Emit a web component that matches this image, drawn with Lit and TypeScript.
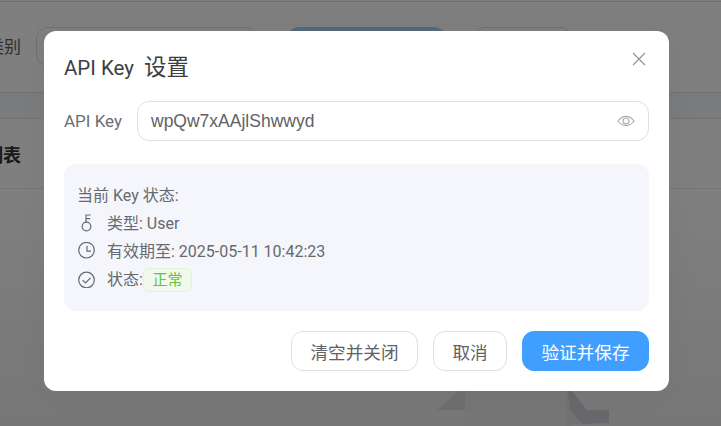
import { LitElement, html, css } from "lit";
import { customElement } from "lit/decorators.js";

@customElement("app-root")
export class AppRoot extends LitElement {
  static styles = css`
    :host { display: block; width: 721px; height: 426px; position: relative; overflow: hidden;
      font-family: "Roboto", "Noto Sans CJK SC", "Liberation Sans", sans-serif; background: #fff; }
    .page { height: 426px; display: flex; flex-direction: column; overflow: hidden; background: #fff; }
    .filters { height: 92px; flex: none; box-sizing: border-box; border-top: 1px solid #d8d8d8; margin-top: 1px; padding: 25px 0 0 0; display: flex; align-items: flex-start; border-bottom: 1px solid #e4e4e4; }
    .lab { font-size: 17px; color: #606266; width: 34px; margin-left: -13px; margin-right: 15px; line-height: 40px; white-space: nowrap; flex: none; }
    .fin { width: 222px; height: 39px; box-sizing: border-box; border: 1px solid #dcdfe6; border-radius: 12px; flex: none; }
    .fbtn { width: 159px; height: 40px; border-radius: 12px; background: #a9d2f8; margin-left: 29px; flex: none; }
    .fbtn2 { width: 99px; height: 39px; box-sizing: border-box; border-radius: 12px; border: 1px solid #dcdfe6; margin-left: 27px; flex: none; }
    .band { height: 26px; flex: none; box-sizing: border-box; background: #f5f6fa; border-bottom: 1px solid #e4e4e4; }
    .title { height: 70px; flex: none; box-sizing: border-box; border-bottom: 1px solid #e8e8e8; font-size: 18px; font-weight: 700; color: #303133; display: flex; align-items: center; }
    .title span { margin-left: -15px; white-space: nowrap; }
    .art { flex: 1; position: relative; background: linear-gradient(#ffffff, #eeeeee); }
    .art svg { position: absolute; left: 0; top: 0; }
    .overlay { position: absolute; inset: 0; background: rgba(0,0,0,.5); }
    .modal { position: absolute; left: 44px; top: 31px; width: 625px; height: 360px; box-sizing: border-box; background: #fff; border-radius: 12px; padding: 20px; display: flex; flex-direction: column; box-shadow: 0 0 32px rgba(0,0,0,.04); }
    .head { font-size: 20.5px; line-height: 32px; color: #3c3e42; height: 32px; white-space: nowrap; }
    .head span { font-size: 22.5px; margin-left: 10px; }
    .close { position: absolute; left: 587px; top: 20px; width: 16px; height: 16px; color: #909399; }
    .form { display: flex; align-items: center; margin-top: 18px; height: 40px; }
    .form label { font-size: 17px; color: #6b6e73; width: 73px; flex: none; }
    .input { flex: 1; height: 40px; box-sizing: border-box; border: 1px solid #dcdfe6; border-radius: 12px; display: flex; align-items: center; padding: 0 13px; justify-content: space-between; }
    .input span { font-family: "Liberation Sans", sans-serif; font-size: 17.5px; color: #606266; }
    .input svg { width: 18px; height: 18px; color: #a8abb2; flex: none; }
    .info { margin-top: 23px; background: #f4f6fb; border-radius: 12px; height: 147px; box-sizing: border-box; padding: 18px 13px; font-size: 16px; color: #66696e; display: flex; flex-direction: column; }
    .row { height: 28.2px; display: flex; align-items: center; line-height: 28px; white-space: nowrap; }
    .row svg { width: 18px; height: 18px; flex: none; margin-right: 12px; margin-bottom: 3px; }
    .tag { display: inline-flex; align-items: center; justify-content: center; width: 49px; height: 24px; box-sizing: border-box; background: #f0f9eb; border: 1px solid #e1f3d8; border-radius: 6px; color: #67c23a; font-size: 15px; }
    .foot { margin-top: 20px; display: flex; justify-content: flex-end; gap: 15px; }
    button { font: inherit; height: 40px; box-sizing: border-box; border-radius: 12px; border: 1px solid #dcdfe6; background: #fff; color: #606266; font-size: 17.6px; padding: 0; cursor: pointer; }
    .b1 { width: 127px; } .b2 { width: 74px; }
    .b3 { width: 127px; background: #409eff; border-color: #409eff; color: #fff; }
  `;
  render() {
    return html`
      <div class="page">
        <div class="filters">
          <div class="lab">类别</div>
          <div class="fin"></div>
          <div class="fbtn"></div>
          <div class="fbtn2"></div>
        </div>
        <div class="band"></div>
        <div class="title"><span>列表</span></div>
        <div class="art">
          <svg width="721" height="237" viewBox="0 189 721 237">
            <path d="M437 410 L465 385 V410 Z" fill="#d9dce0"/>
            <path d="M465 385 H567 V426 H465 Z" fill="#eaebed"/>
            <path d="M567 385 L587 410 H609 V423 L582 424 L570 410 Z" fill="#cdd0d6"/>
            <path d="M567 385 L570 410 L582 424 L567 426 Z" fill="#e0e2e5"/>
          </svg>
        </div>
      </div>
      <div class="overlay"></div>
      <div class="modal" role="dialog">
        <div class="head">API Key<span>设置</span></div>
        <svg class="close" viewBox="0 0 16 16" fill="none" stroke="currentColor" stroke-width="1.1"><path d="M2 2 L14 14 M14 2 L2 14"/></svg>
        <div class="form">
          <label>API Key</label>
          <div class="input">
            <span>wpQw7xAAjlShwwyd</span>
            <svg viewBox="0 0 18 18" fill="none" stroke="currentColor" stroke-width="1.1"><path d="M1 9 C3.5 5.6 6 4.4 9 4.4 S14.5 5.6 17 9 C14.5 12.4 12 13.6 9 13.6 S3.5 12.4 1 9 Z"/><circle cx="9" cy="9" r="3"/></svg>
          </div>
        </div>
        <div class="info">
          <div class="row">当前 Key 状态:</div>
          <div class="row">
            <svg viewBox="0 0 18 18" fill="none" stroke="currentColor" stroke-width="1.2"><circle cx="9.5" cy="12.5" r="4.3"/><path d="M9 8.2 V1 H13.8 M9 4.6 H13.2"/></svg>
            类型: User
          </div>
          <div class="row">
            <svg viewBox="0 0 18 18" fill="none" stroke="currentColor" stroke-width="1.2"><circle cx="9.5" cy="8.2" r="7.8"/><path d="M10 3.7 V9.2 H14"/></svg>
            有效期至: 2025-05-11 10:42:23
          </div>
          <div class="row">
            <svg viewBox="0 0 18 18" fill="none" stroke="currentColor" stroke-width="1.2"><circle cx="9.5" cy="10" r="7.8"/><path d="M5.7 10.2 L8.5 13 L13.5 7.8"/></svg>
            状态:<span class="tag">正常</span>
          </div>
        </div>
        <div class="foot">
          <button class="b1">清空并关闭</button>
          <button class="b2">取消</button>
          <button class="b3">验证并保存</button>
        </div>
      </div>
    `;
  }
}
